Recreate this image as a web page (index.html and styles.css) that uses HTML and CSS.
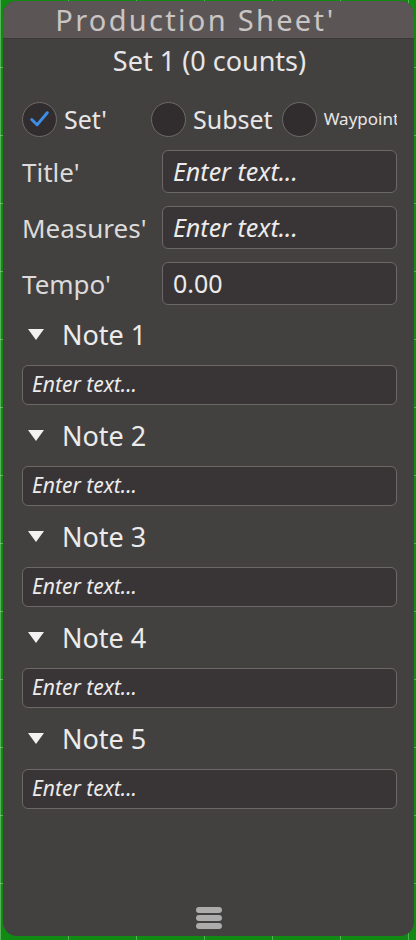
FILE: index.html
```html
<!DOCTYPE html>
<html>
<head>
<meta charset="utf-8">
<link rel="stylesheet" href="styles.css">
</head>
<body>
<div class="panel">
  <div class="header">Production Sheet'</div>
  <div class="body">
    <div class="subtitle">Set 1 (0 counts)</div>
    <div class="radios">
      <div class="radio">
        <span class="circle">
          <svg viewBox="0 0 34 34" width="34" height="34"><path d="M9 17.5 L14.5 23 L25 10.5" fill="none" stroke="#3d8ee8" stroke-width="3" stroke-linecap="round" stroke-linejoin="round"/></svg>
        </span>
        <span class="rlabel">Set'</span>
      </div>
      <div class="radio r2">
        <span class="circle"></span>
        <span class="rlabel">Subset</span>
      </div>
      <div class="radio r3">
        <span class="circle"></span>
        <span class="rlabel small">Waypoint</span>
      </div>
    </div>
    <div class="fields">
      <div class="field"><span class="flabel">Title'</span><div class="input italic">Enter text...</div></div>
      <div class="field"><span class="flabel">Measures'</span><div class="input italic">Enter text...</div></div>
      <div class="field"><span class="flabel">Tempo'</span><div class="input">0.00</div></div>
    </div>
    <div class="notes">
      <div class="note"><div class="nhead"><span class="tri"></span>Note 1</div><div class="ninput">Enter text...</div></div>
      <div class="note"><div class="nhead"><span class="tri"></span>Note 2</div><div class="ninput">Enter text...</div></div>
      <div class="note"><div class="nhead"><span class="tri"></span>Note 3</div><div class="ninput">Enter text...</div></div>
      <div class="note"><div class="nhead"><span class="tri"></span>Note 4</div><div class="ninput">Enter text...</div></div>
      <div class="note"><div class="nhead"><span class="tri"></span>Note 5</div><div class="ninput">Enter text...</div></div>
    </div>
    <div class="spacer"></div>
    <div class="grip">
      <span></span><span></span><span></span>
    </div>
  </div>
</div>
</body>
</html>
```
FILE: styles.css
```css
html, body {
  margin: 0;
  padding: 0;
}
body {
  width: 416px;
  height: 940px;
  overflow: hidden;
  background-color: #118a14;
  background-image:
    linear-gradient(90deg, rgba(200,235,200,0.4) 1px, transparent 1px),
    linear-gradient(0deg, rgba(200,235,200,0.4) 1px, transparent 1px);
  background-size: 68px 68px, 68px 68px;
  font-family: "Noto Sans", "Open Sans", sans-serif;
  color: #e8e6e6;
}
.panel {
  margin: 1px 2px 0 3px;
  width: 411px;
  height: 935px;
  border-radius: 14px;
  overflow: hidden;
  background: #434140;
  display: flex;
  flex-direction: column;
}
.header {
  height: 37px;
  background: #5b5555;
  border-bottom: 1px solid #3c3838;
  color: #c9c5c4;
  font-size: 29px;
  letter-spacing: 2.3px;
  line-height: 37px;
  text-align: center;
  padding-right: 26px;
  flex: none;
  white-space: nowrap;
}
.body {
  flex: 1;
  display: flex;
  flex-direction: column;
  padding: 0 17px 0 19px;
}
.subtitle {
  font-size: 27px;
  line-height: 32px;
  text-align: center;
  margin-top: 6px;
}
.radios {
  display: flex;
  align-items: center;
  margin-top: 24px;
  height: 36px;
  overflow: hidden;
  white-space: nowrap;
}
.radio {
  display: flex;
  align-items: center;
}
.r2 { margin-left: 44px; }
.r3 { margin-left: 9px; }
.circle {
  width: 33px;
  height: 33px;
  border-radius: 50%;
  background: #312d2e;
  border: 1.5px solid #6e6a6a;
  display: flex;
  align-items: center;
  justify-content: center;
  flex: none;
}
.circle svg { display: block; }
.rlabel {
  font-size: 25px;
  margin-left: 7px;
  line-height: 30px;
}
.small {
  font-size: 17px;
}
.fields {
  display: flex;
  flex-direction: column;
  gap: 13px;
  margin-top: 13px;
}
.field {
  display: flex;
  align-items: center;
  height: 43px;
}
.flabel {
  width: 140px;
  font-size: 26px;
  color: #dcdada;
  flex: none;
  white-space: nowrap;
}
.input {
  flex: 1;
  box-sizing: border-box;
  height: 43px;
  background: #393536;
  border: 1.5px solid #6c6868;
  border-radius: 6px;
  font-size: 25px;
  line-height: 40px;
  padding-left: 10px;
  color: #ecebeb;
}
.italic { font-style: italic; }
.notes {
  display: flex;
  flex-direction: column;
  margin-top: 12px;
}
.note {
  display: flex;
  flex-direction: column;
  height: 101px;
}
.nhead {
  display: flex;
  align-items: center;
  height: 34px;
  font-size: 27px;
  color: #ecebeb;
  padding-left: 6px;
}
.tri {
  width: 0;
  height: 0;
  border-left: 8.5px solid transparent;
  border-right: 8.5px solid transparent;
  border-top: 11px solid #f2f2f2;
  margin-right: 18px;
}
.ninput {
  margin-top: 14px;
  height: 40px;
  box-sizing: border-box;
  background: #393536;
  border: 1.5px solid #6c6868;
  border-radius: 6px;
  font-size: 21px;
  font-style: italic;
  line-height: 37px;
  padding-left: 9px;
  color: #ecebeb;
}
.spacer { flex: 1; }
.grip {
  display: flex;
  flex-direction: column;
  align-items: center;
  gap: 2px;
  margin-bottom: 7px;
  padding-right: 2px;
}
.grip span {
  width: 26px;
  height: 6px;
  border-radius: 3px;
  background: #acacac;
}
```
